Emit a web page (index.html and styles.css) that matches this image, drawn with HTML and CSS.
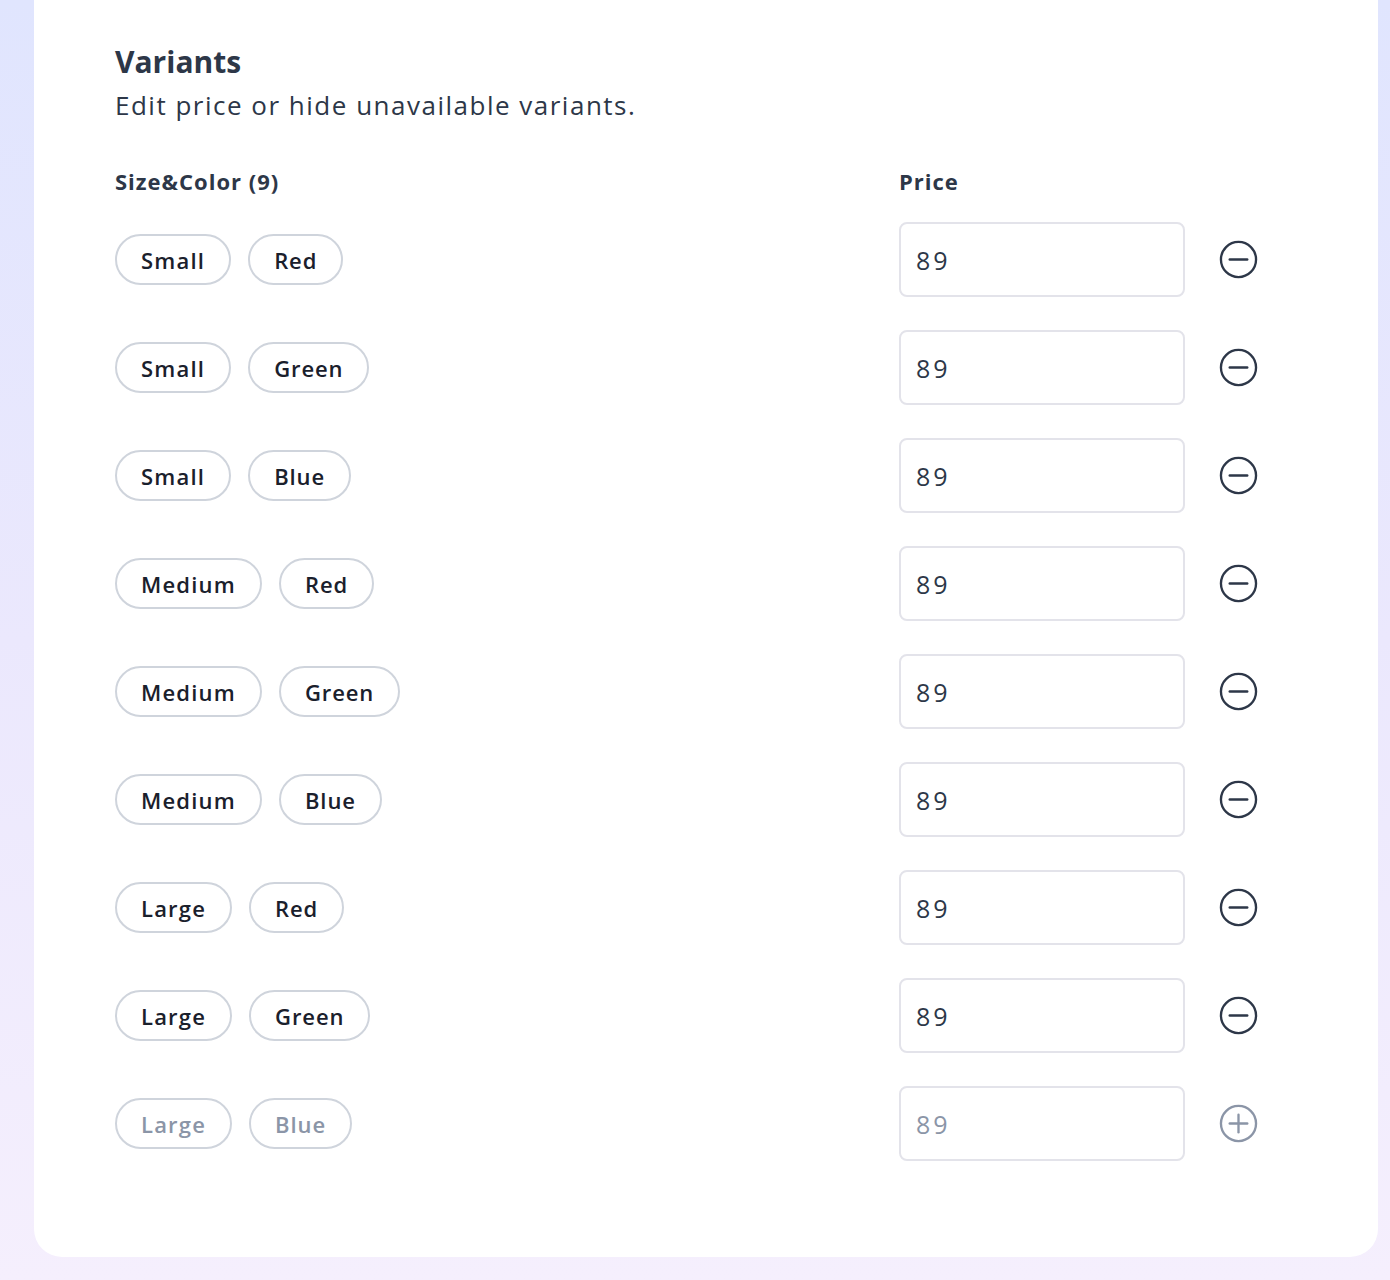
FILE: index.html
```html
<!DOCTYPE html>
<html lang="en">
<head>
<meta charset="utf-8">
<title>Variants</title>
<link rel="stylesheet" href="styles.css">
</head>
<body>
<div class="page">
  <section class="card">
    <h2 class="title">Variants</h2>
    <p class="subtitle">Edit price or hide unavailable variants.</p>
    <div class="table">
      <div class="head">
        <div class="col-name">Size&amp;Color (9)</div>
        <div class="col-price">Price</div>
      </div>
      <div class="row">
        <div class="col-name"><span class="pill">Small</span><span class="pill">Red</span></div>
        <div class="price">89</div>
        <svg class="icon" viewBox="0 0 40 40"><circle cx="20" cy="20" r="18" /><line x1="11" y1="20" x2="29" y2="20" /></svg>
      </div>
      <div class="row">
        <div class="col-name"><span class="pill">Small</span><span class="pill">Green</span></div>
        <div class="price">89</div>
        <svg class="icon" viewBox="0 0 40 40"><circle cx="20" cy="20" r="18" /><line x1="11" y1="20" x2="29" y2="20" /></svg>
      </div>
      <div class="row">
        <div class="col-name"><span class="pill">Small</span><span class="pill">Blue</span></div>
        <div class="price">89</div>
        <svg class="icon" viewBox="0 0 40 40"><circle cx="20" cy="20" r="18" /><line x1="11" y1="20" x2="29" y2="20" /></svg>
      </div>
      <div class="row">
        <div class="col-name"><span class="pill">Medium</span><span class="pill">Red</span></div>
        <div class="price">89</div>
        <svg class="icon" viewBox="0 0 40 40"><circle cx="20" cy="20" r="18" /><line x1="11" y1="20" x2="29" y2="20" /></svg>
      </div>
      <div class="row">
        <div class="col-name"><span class="pill">Medium</span><span class="pill">Green</span></div>
        <div class="price">89</div>
        <svg class="icon" viewBox="0 0 40 40"><circle cx="20" cy="20" r="18" /><line x1="11" y1="20" x2="29" y2="20" /></svg>
      </div>
      <div class="row">
        <div class="col-name"><span class="pill">Medium</span><span class="pill">Blue</span></div>
        <div class="price">89</div>
        <svg class="icon" viewBox="0 0 40 40"><circle cx="20" cy="20" r="18" /><line x1="11" y1="20" x2="29" y2="20" /></svg>
      </div>
      <div class="row">
        <div class="col-name"><span class="pill">Large</span><span class="pill">Red</span></div>
        <div class="price">89</div>
        <svg class="icon" viewBox="0 0 40 40"><circle cx="20" cy="20" r="18" /><line x1="11" y1="20" x2="29" y2="20" /></svg>
      </div>
      <div class="row">
        <div class="col-name"><span class="pill">Large</span><span class="pill">Green</span></div>
        <div class="price">89</div>
        <svg class="icon" viewBox="0 0 40 40"><circle cx="20" cy="20" r="18" /><line x1="11" y1="20" x2="29" y2="20" /></svg>
      </div>
      <div class="row disabled">
        <div class="col-name"><span class="pill">Large</span><span class="pill">Blue</span></div>
        <div class="price">89</div>
        <svg class="icon" viewBox="0 0 40 40"><circle cx="20" cy="20" r="18" /><line x1="11" y1="20" x2="29" y2="20" /><line x1="20" y1="11" x2="20" y2="29" /></svg>
      </div>
    </div>
  </section>
</div>
</body>
</html>
```

FILE: styles.css
```css
html, body {
  margin: 0;
  padding: 0;
}
body {
  font-family: "Open Sans", "Liberation Sans", sans-serif;
  background: linear-gradient(180deg, #e0e5fe 0%, #ebe8fd 50%, #f5effd 100%);
  min-height: 1280px;
  color: #2d3748;
}
.page {
  padding: 0 12px 22px 34px;
}
.card {
  background: #ffffff;
  width: 1344px;
  box-sizing: border-box;
  border-radius: 0 0 28px 28px;
  padding: 44px 80px 96px 81px;
}
.title {
  margin: 0;
  font-size: 30px;
  line-height: 36px;
  font-weight: 700;
  color: #2d3748;
}
.subtitle {
  margin: 7px 0 0;
  font-size: 26px;
  line-height: 36px;
  font-weight: 400;
  color: #2d3748;
  letter-spacing: 1.5px;
}
.table {
  margin-top: 44px;
  display: flex;
  flex-direction: column;
  gap: 33px;
}
.head {
  display: flex;
  font-size: 22px;
  line-height: 28px;
  font-weight: 700;
  color: #2d3748;
  letter-spacing: 1px;
  margin-bottom: -6px;
}
.col-name {
  width: 784px;
  display: flex;
  gap: 17px;
  align-items: center;
}
.row {
  display: flex;
  align-items: center;
  height: 75px;
}
.pill {
  height: 51px;
  box-sizing: border-box;
  border: 2px solid #cfd4dc;
  border-radius: 26px;
  padding: 0 24px;
  display: flex;
  align-items: center;
  font-size: 22px;
  font-weight: 600;
  color: #1a202c;
  letter-spacing: 0.9px;
}
.pill:first-child {
  letter-spacing: 1.2px;
}
.price {
  width: 286px;
  height: 75px;
  box-sizing: border-box;
  border: 2px solid #e3e3ea;
  border-radius: 8px;
  padding: 0 15px;
  display: flex;
  align-items: center;
  font-size: 25px;
  color: #2d3748;
  letter-spacing: 3px;
}
.icon {
  width: 39px;
  height: 39px;
  margin-left: 34px;
  fill: none;
  stroke: #2d3748;
  stroke-width: 2.4;
  stroke-linecap: round;
}
.disabled .pill,
.disabled .price {
  color: #8b95a7;
}
.disabled .icon {
  stroke: #8b95a7;
}
```
